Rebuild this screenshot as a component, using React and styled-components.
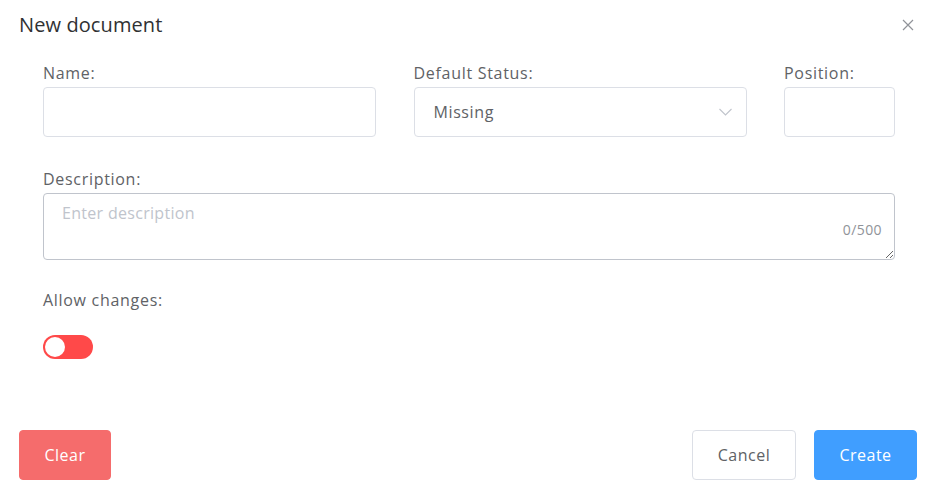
import React, { useState } from 'react';
import styled, { createGlobalStyle } from 'styled-components';

const GlobalStyle = createGlobalStyle`
  body {
    margin: 0;
    background: #ffffff;
    font-family: "Open Sans", "Noto Sans", sans-serif;
  }
`;

const Dialog = styled.div`
  width: 933px;
  height: 492px;
  background: #ffffff;
  box-sizing: border-box;
  display: flex;
  flex-direction: column;
`;

const Header = styled.div`
  display: flex;
  justify-content: space-between;
  align-items: center;
  padding: 11px 18px 0 19px;
  height: 28px;
`;

const Title = styled.div`
  font-size: 20px;
  letter-spacing: 0.1px;
  color: #303133;
  line-height: 26px;
`;

const CloseButton = styled.button`
  border: none;
  background: none;
  padding: 0;
  width: 14px;
  height: 14px;
  display: flex;
  align-items: center;
  justify-content: center;
  cursor: pointer;
`;

const Body = styled.div`
  padding: 24px 38px 0 43px;
  display: flex;
  flex-direction: column;
`;

const Row = styled.div`
  display: flex;
  justify-content: space-between;
  margin-bottom: ${p => p.gap || 0}px;
`;

const Field = styled.div`
  display: flex;
  flex-direction: column;
  width: ${p => (p.width ? `${p.width}px` : '100%')};
`;

const Label = styled.label`
  font-size: 16px;
  letter-spacing: 0.7px;
  line-height: 20px;
  color: #606266;
  margin-bottom: ${p => p.spacing || 4}px;
`;

const Input = styled.input`
  box-sizing: border-box;
  height: 50px;
  width: 100%;
  border: 1px solid #dcdfe6;
  border-radius: 4px;
  padding: 0 18px;
  font-family: inherit;
  font-size: 16px;
  color: #606266;
  outline: none;
`;

const SelectBox = styled.div`
  box-sizing: border-box;
  height: 50px;
  border: 1px solid #dcdfe6;
  border-radius: 4px;
  padding: 0 14px 0 19px;
  display: flex;
  align-items: center;
  justify-content: space-between;
  font-size: 16px;
  letter-spacing: 0.6px;
  color: #606266;
  cursor: pointer;
`;

const TextareaWrap = styled.div`
  position: relative;
`;

const Textarea = styled.textarea`
  box-sizing: border-box;
  display: block;
  width: 100%;
  height: 67px;
  border: 1px solid #c0c4cc;
  border-radius: 4px;
  padding: 8px 18px;
  font-family: inherit;
  font-size: 16px;
  letter-spacing: 0.3px;
  line-height: 22px;
  color: #606266;
  resize: vertical;
  outline: none;

  &::placeholder {
    color: #c0c4cc;
  }
`;

const Counter = styled.span`
  position: absolute;
  right: 13px;
  bottom: 21px;
  font-size: 14px;
  letter-spacing: 0.4px;
  color: #909399;
  line-height: 18px;
`;

const Switch = styled.button`
  width: 50px;
  height: 24px;
  border-radius: 12px;
  border: none;
  padding: 2px;
  background: ${p => (p.on ? '#13ce66' : '#ff4949')};
  display: flex;
  justify-content: ${p => (p.on ? 'flex-end' : 'flex-start')};
  cursor: pointer;
`;

const Knob = styled.span`
  width: 20px;
  height: 20px;
  border-radius: 50%;
  background: #ffffff;
`;

const Footer = styled.div`
  margin-top: auto;
  padding: 0 16px 12px 19px;
  display: flex;
  justify-content: space-between;
`;

const ButtonGroup = styled.div`
  display: flex;
  gap: 18px;
`;

const Button = styled.button`
  box-sizing: border-box;
  height: 50px;
  width: ${p => p.width}px;
  border-radius: 4px;
  font-family: inherit;
  font-size: 16px;
  letter-spacing: 0.5px;
  font-weight: ${p => (p.variant ? 500 : 400)};
  cursor: pointer;
  border: 1px solid ${p => (p.variant === 'danger' ? '#f56c6c' : p.variant === 'primary' ? '#409eff' : '#dcdfe6')};
  background: ${p => (p.variant === 'danger' ? '#f56c6c' : p.variant === 'primary' ? '#409eff' : '#ffffff')};
  color: ${p => (p.variant ? '#ffffff' : '#606266')};
`;

const App = () => {
    const [description, setDescription] = useState('');
    const [allow, setAllow] = useState(false);

    return (
        <>
            <GlobalStyle />
            <Dialog>
                <Header>
                    <Title>New document</Title>
                    <CloseButton aria-label="Close">
                        <svg width="12" height="12" viewBox="0 0 12 12">
                            <path d="M1 1L11 11M11 1L1 11" stroke="#909399" strokeWidth="1.2" />
                        </svg>
                    </CloseButton>
                </Header>
                <Body>
                    <Row gap={32}>
                        <Field width={333}>
                            <Label>Name:</Label>
                            <Input />
                        </Field>
                        <Field width={333}>
                            <Label>Default Status:</Label>
                            <SelectBox>
                                <span>Missing</span>
                                <svg width="13" height="8" viewBox="0 0 13 8">
                                    <path d="M0.5 1L6.5 7L12.5 1" fill="none" stroke="#c0c4cc" strokeWidth="1.1" />
                                </svg>
                            </SelectBox>
                        </Field>
                        <Field width={111}>
                            <Label>Position:</Label>
                            <Input />
                        </Field>
                    </Row>
                    <Row gap={30}>
                        <Field>
                            <Label spacing={4}>Description:</Label>
                            <TextareaWrap>
                                <Textarea
                                    placeholder="Enter description"
                                    maxLength={500}
                                    value={description}
                                    onChange={e => setDescription(e.target.value)}
                                />
                                <Counter>{description.length}/500</Counter>
                            </TextareaWrap>
                        </Field>
                    </Row>
                    <Row>
                        <Field>
                            <Label spacing={25}>Allow changes:</Label>
                            <Switch on={allow} onClick={() => setAllow(!allow)}>
                                <Knob />
                            </Switch>
                        </Field>
                    </Row>
                </Body>
                <Footer>
                    <Button variant="danger" width={92}>Clear</Button>
                    <ButtonGroup>
                        <Button width={104}>Cancel</Button>
                        <Button variant="primary" width={103}>Create</Button>
                    </ButtonGroup>
                </Footer>
            </Dialog>
        </>
    );
};

export default App;
